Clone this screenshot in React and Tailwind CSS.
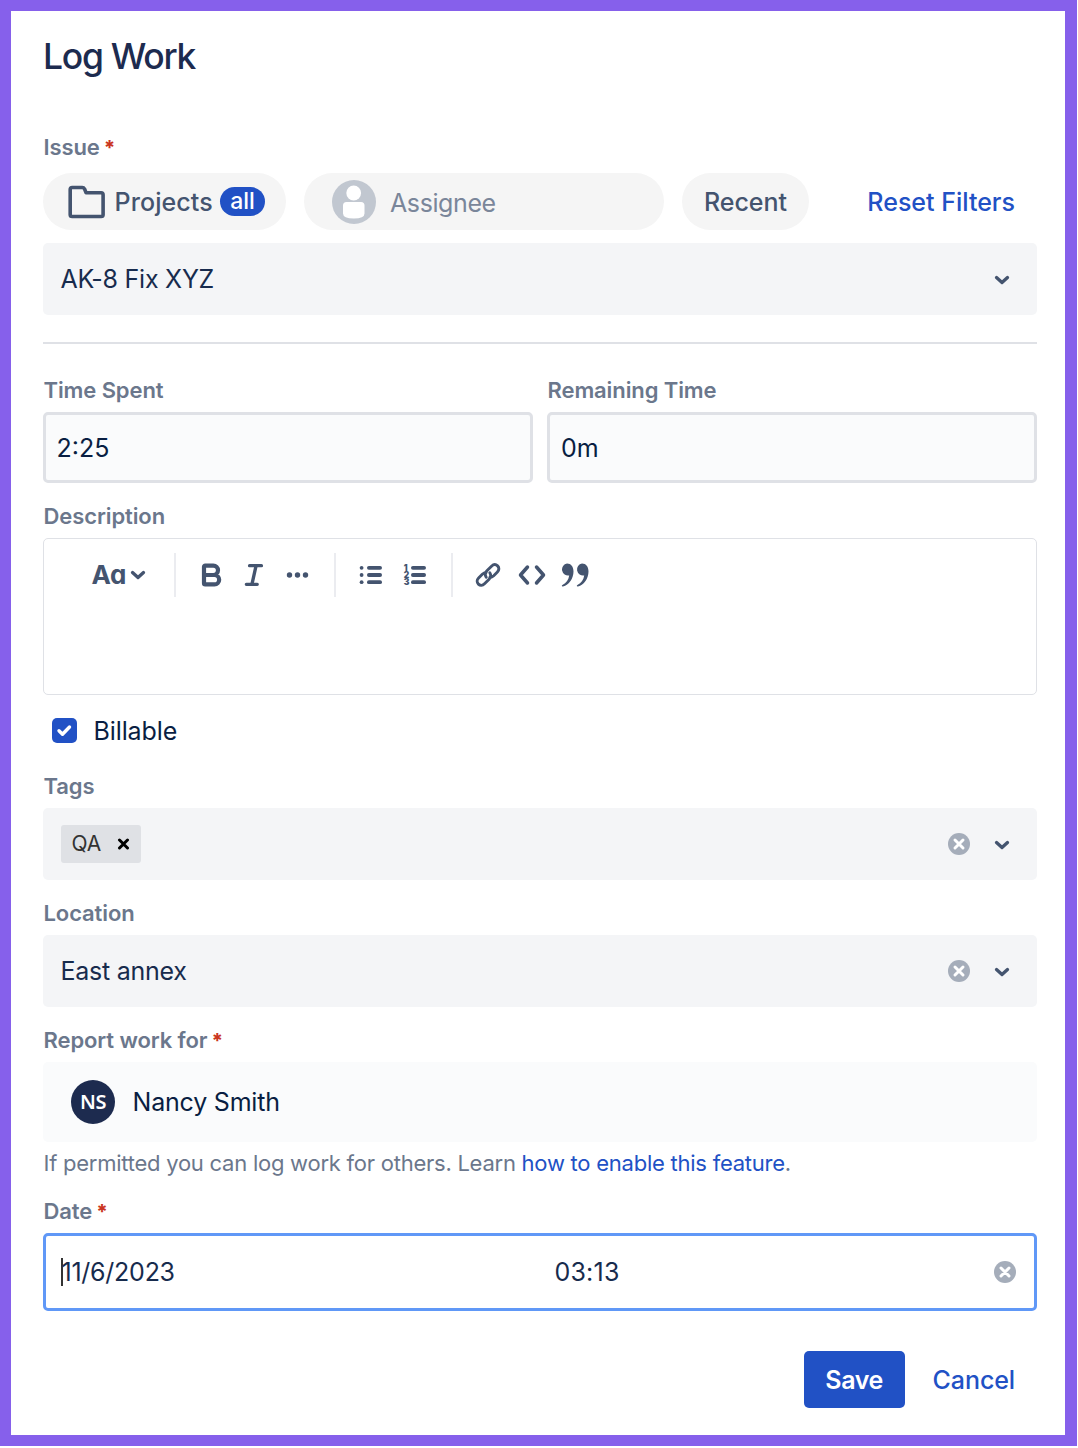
import React, { useState } from 'react';
import { Bold } from 'lucide-react';

const Label = ({ children, required }) => (
  <div className="flex h-8 items-center pl-[0.5px] text-[22px] leading-8 font-semibold tracking-[-0.1px] text-[#6b778c]">
    {children}
    {required && <span className="ml-1 pt-0.5 text-[20px] font-extrabold text-[#ca3521]">*</span>}
  </div>
);

const Chevron = ({ className = '' }) => (
  <svg className={className} width="16" height="10" viewBox="0 0 16 10" fill="none" stroke="#44546f" strokeWidth="3.300" strokeLinecap="round" strokeLinejoin="round">
    <path d="M2.500 2.500L8 7.500l5.500-5" />
  </svg>
);

const ClearIcon = () => (
  <svg width="22" height="22" viewBox="0 0 22 22" fill="none">
    <circle cx="11" cy="11" r="11" fill="#a5adba" />
    <path d="M7 7l8 8M15 7l-8 8" stroke="#fff" strokeWidth="3" strokeLinecap="round" />
  </svg>
);

const FolderIcon = () => (
  <svg width="37" height="34" viewBox="0 0 37 34" fill="none" stroke="#44546f" strokeWidth="3.600" strokeLinejoin="round">
    <path d="M2.200 4.500q0-2 2-2h10q1.600 0 2.400 1.500l1.500 3.800h15q2 0 2 2v20q0 1.700-2 1.700H4.200q-2 0-2-1.700z" />
  </svg>
);

const AssigneeIcon = () => (
  <svg width="44" height="44" viewBox="0 0 44 44">
    <circle cx="22" cy="22" r="22" fill="#c1c7d0" />
    <circle cx="21.700" cy="13" r="7.400" fill="#fff" />
    <path d="M11 25.500q0-3.500 3.500-3.500h14.500q3.500 0 3.500 3.500v8q0 5-10.700 5t-10.800-5z" fill="#fff" />
  </svg>
);

const ItalicIcon = () => (
  <svg width="20" height="24" viewBox="0 0 20 24" fill="none" stroke="#44546f" strokeLinecap="round">
    <path d="M5.500 2.700h12M2.300 21.300h11" strokeWidth="3.200" />
    <path d="M12 3L8 21" strokeWidth="3.400" />
  </svg>
);

const BulletIcon = () => (
  <svg width="24" height="22" viewBox="0 0 24 22" fill="#44546f">
    {[3.8, 11, 18.2].map((y) => (
      <g key={y}>
        <circle cx="2.600" cy={y} r="1.900" />
        <rect x="8" y={y - 1.9} width="15" height="3.800" rx="1.900" />
      </g>
    ))}
  </svg>
);

const NumberIcon = () => (
  <svg width="24" height="22" viewBox="0 0 24 22" fill="#44546f">
    {[3.8, 11, 18.2].map((y, i) => (
      <g key={y}>
        <text x="0.800" y={y + 3} fontSize="8.500" fontWeight="900">{i + 1}</text>
        <rect x="8" y={y - 1.9} width="15" height="3.800" rx="1.900" />
      </g>
    ))}
  </svg>
);

const LinkIcon = () => (
  <svg width="26" height="26" viewBox="0 0 26 26" fill="none" stroke="#44546f" strokeWidth="2.900" strokeLinecap="round" strokeLinejoin="round">
    <path d="M11.200 15.200c-1.500-2.300-1.200-4.500.7-6.400l4.600-4.600c2-2 4.400-2 6.100-.3s1.700 4.200-.2 6.100l-3.700 3.700q-1.600 1.500-3.700 1.500" />
    <path d="M14.800 10.800c1.500 2.300 1.200 4.500-.7 6.400l-4.600 4.600c-2 2-4.400 2-6.100.3s-1.700-4.200.2-6.100l3.700-3.700q1.600-1.500 3.700-1.500" />
  </svg>
);

const CodeIcon = () => (
  <svg width="28" height="22" viewBox="0 0 28 22" fill="none" stroke="#44546f" strokeWidth="3.500" strokeLinecap="round" strokeLinejoin="round">
    <path d="M9.500 3L2.500 11l7 8M18.500 3l7 8-7 8" />
  </svg>
);

const QuoteIcon = () => (
  <svg width="28" height="24" viewBox="0 0 28 24" fill="#44546f">
    <path d="M6 .5c4 0 6.500 3 6.500 8 0 7-4.500 13.500-10.500 15-1.300.3-1.600-1-.6-1.500 4-2 6.200-5.300 6.800-9.500a6 6 0 1 1-2.200-12z" />
    <path d="M21 .5c4 0 6.500 3 6.500 8 0 7-4.500 13.500-10.500 15-1.300.3-1.600-1-.6-1.500 4-2 6.200-5.300 6.800-9.500a6 6 0 1 1-2.200-12z" />
  </svg>
);

const Tool = ({ children }) => (
  <button className="flex h-11 w-[43.5px] items-center justify-center">{children}</button>
);

const Divider = () => <div className="h-11 w-0.5 bg-[#ebecf0]" />;

const SelectBox = ({ children, clearable }) => (
  <div className="flex h-[72px] items-center rounded-[5px] bg-[#f4f5f7] pr-[27.5px] pl-[17.5px] text-[25px] tracking-[-0.25px] text-[#172b4d]">
    <div className="flex-1">{children}</div>
    {clearable && <ClearIcon />}
    <Chevron className="mt-px ml-6" />
  </div>
);

const App = () => {
  const [billable, setBillable] = useState(true);

  return (
    <div className="h-[1448px] w-[1078px] overflow-hidden bg-white font-['Inter',sans-serif]">
      <div className="h-[1446px] w-[1077px] border-[11px] border-r-[12px] border-[#8660eb] bg-white pt-5 pr-7 pl-8">
        <h1 className="h-[51px] pt-px text-[35.5px] leading-[50px] font-[550] tracking-[-1.3px] text-[#1d2b4f]">Log Work</h1>

        {/* Issue */}
        <div className="mt-[49px]">
          <Label required>Issue</Label>
        </div>
        <div className="mt-2.5 flex h-[57px] items-center text-[25px] font-medium text-[#44546f]">
          <button className="flex h-full w-[243px] items-center rounded-full bg-[#f5f5f5] pl-[25px]">
            <FolderIcon />
            <span className="ml-[9.5px] w-[105.5px] pt-0.5 text-left tracking-[0.1px]">Projects</span>
            <span className="flex h-[29px] w-[45px] items-center justify-center rounded-full bg-[#2151c5] text-[23px] text-white">all</span>
          </button>
          <div className="ml-[18px] flex h-full w-[360px] items-center rounded-full bg-[#f5f5f5] pl-7 font-normal text-[#7a869a]">
            <AssigneeIcon />
            <span className="ml-3.5 pt-1 tracking-[-0.4px]">Assignee</span>
          </div>
          <button className="ml-[18px] h-full w-[127px] rounded-full bg-[#f5f5f5] pt-0.5">Recent</button>
          <button className="ml-auto pt-0.5 pr-[22px] text-[#2151c5]">Reset Filters</button>
        </div>
        <div className="mt-[13px]">
          <SelectBox><p className="pt-0.5">AK-8 Fix XYZ</p></SelectBox>
        </div>
        <div className="mt-[27px] h-0.5 bg-[#dfe1e6]" />

        {/* Time */}
        <div className="mt-[30px] grid grid-cols-2 gap-3.5">
          <div>
            <Label>Time Spent</Label>
            <div className="mt-1.5 flex h-[71px] items-center rounded-[5px] border-3 border-[#dfe1e6] bg-[#fafbfc] pt-0.5 pl-[10.5px] text-[25px] text-[#091e42]">2:25</div>
          </div>
          <div>
            <Label>Remaining Time</Label>
            <div className="mt-1.5 flex h-[71px] items-center rounded-[5px] border-3 border-[#dfe1e6] bg-[#fafbfc] pt-0.5 pl-[11px] text-[25px] text-[#091e42]">0m</div>
          </div>
        </div>

        {/* Description */}
        <div className="mt-[17px]">
          <Label>Description</Label>
        </div>
        <div className="mt-1.5 h-[157px] rounded-[5px] border border-[#dfe1e6] pt-3.5">
          <div className="flex items-center">
            <button className="flex h-11 w-[130px] items-center pl-[47.5px] text-[26px] font-bold text-[#44546f] [font-feature-settings:'cv11','ss03']">
              <span className="w-[38.5px] pb-0.5 text-left tracking-[-0.4px]">Aa</span>
              <Chevron />
            </button>
            <Divider />
            <div className="flex pr-[14.5px] pl-[13px]">
              <Tool><Bold className="h-7 w-7" color="#44546f" strokeWidth={3.6} /></Tool>
              <Tool><ItalicIcon /></Tool>
              <Tool>
                <svg width="24" height="6" viewBox="0 0 24 6" fill="#44546f">
                  <circle cx="3.500" cy="3" r="2.700" />
                  <circle cx="11.500" cy="3" r="2.700" />
                  <circle cx="19.500" cy="3" r="2.700" />
                </svg>
              </Tool>
            </div>
            <Divider />
            <div className="flex pr-[14.5px] pl-[13.5px]">
              <Tool><BulletIcon /></Tool>
              <Tool><NumberIcon /></Tool>
            </div>
            <Divider />
            <div className="flex px-[13.5px]">
              <Tool><LinkIcon /></Tool>
              <Tool><CodeIcon /></Tool>
              <Tool><QuoteIcon /></Tool>
            </div>
          </div>
        </div>

        <div className="mt-[15px] flex h-[41px] cursor-pointer items-center pl-[9px]" onClick={() => setBillable(!billable)}>
          <div className="flex h-[25px] w-[25px] items-center justify-center rounded-[5px] bg-[#2151c5]">
            {billable && (
              <svg width="17" height="13" viewBox="0 0 17 13" fill="none" stroke="#fff" strokeWidth="3.400" strokeLinecap="round" strokeLinejoin="round">
                <path d="M3 6.800l3.500 3.400L13.500 3" />
              </svg>
            )}
          </div>
          <span className="ml-[16.5px] pt-0.5 text-[25px] tracking-[-0.1px] text-[#091e42]">Billable</span>
        </div>

        {/* Tags */}
        <div className="mt-[19px]">
          <Label>Tags</Label>
        </div>
        <div className="mt-1.5">
          <SelectBox clearable>
            <div className="flex h-[38px] w-20 items-center rounded-[3px] bg-[#dfe1e5] pl-[11px] text-[21px] tracking-normal text-[#333]">
              <span className="w-[45px]">QA</span>
              <svg width="13" height="13" viewBox="0 0 13 13" stroke="#000" strokeWidth="3" strokeLinecap="round">
                <path d="M2.500 2l8 8M10.500 2l-8 8" />
              </svg>
            </div>
          </SelectBox>
        </div>

        {/* Location */}
        <div className="mt-[17px]">
          <Label>Location</Label>
        </div>
        <div className="mt-1.5">
          <SelectBox clearable><p className="pt-0.5">East annex</p></SelectBox>
        </div>

        {/* Author */}
        <div className="mt-[17px]">
          <Label required>Report work for</Label>
        </div>
        <div className="mt-1.5 flex h-20 items-center rounded-[5px] bg-[#fafbfc] pl-7 text-[25px] text-[#091e42]">
          <div className="flex h-11 w-11 items-center justify-center rounded-full bg-[#1d2b4f] font-['Noto_Sans',sans-serif] text-[20px] font-semibold tracking-[-0.5px] text-white">NS</div>
          <span className="ml-[17.5px] pt-0.5 tracking-[-0.2px]">Nancy Smith</span>
        </div>
        <p className="mt-[5px] h-8 pl-[0.5px] text-[22px] leading-8 tracking-[-0.245px] text-[#6b778c]">
          If permitted you can log work for others. Learn <a className="text-[#2151c5]">how to enable this feature</a>.
        </p>

        {/* Date */}
        <div className="mt-4">
          <Label required>Date</Label>
        </div>
        <div className="mt-1.5 flex h-[78px] items-center rounded-[5px] border-3 border-[#6098f7] pr-[18px] pl-[15px] text-[25px] text-[#172b4d]">
          <div className="h-7 w-0.5 bg-[#333]" />
          <span className="-ml-[1.5px] w-[493px] pt-0.5 tracking-[-0.25px]">11/6/2023</span>
          <span className="flex-1 pt-0.5 tracking-[0.2px]">03:13</span>
          <ClearIcon />
        </div>

        <div className="mt-10 flex h-[57px] items-center justify-end pr-[22px] text-[25px] font-medium text-[#2151c5]">
          <button className="mr-7 h-full w-[101px] rounded-[5px] bg-[#2151c5] pt-0.5 font-semibold tracking-[-0.4px] text-white">Save</button>
          <button className="pt-0.5 tracking-[-0.1px]">Cancel</button>
        </div>
      </div>
    </div>
  );
};

export default App;
